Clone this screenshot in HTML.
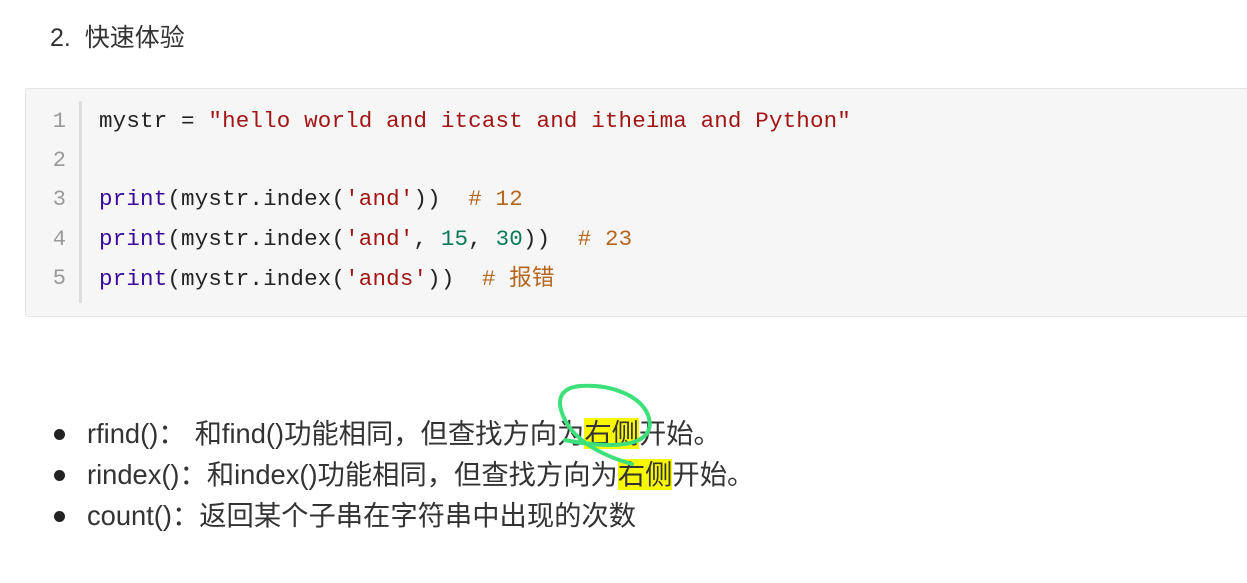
<!DOCTYPE html>
<html><head><meta charset="utf-8"><style>
body{margin:0;width:1247px;height:583px;background:#fff;position:relative;overflow:hidden;font-family:"Liberation Sans","Noto Sans CJK SC",sans-serif;color:#333}
.h{position:absolute;left:50px;top:18px;font-size:25px;color:#333}
.code{position:absolute;left:25px;top:88px;width:1224px;height:227px;background:#f6f6f6;border:1px solid #e4e4e4;border-radius:3px}
.gut{position:absolute;left:79px;top:101px;width:3px;height:202px;background:#ddd}
.ln{position:absolute;left:40px;width:26px;text-align:right;font-family:"Liberation Mono",monospace;font-size:22px;line-height:30px;color:#999}
.cl{position:absolute;left:99px;font-family:"Liberation Mono","Noto Sans CJK SC",monospace;font-size:22.5px;line-height:30px;letter-spacing:0.17px;color:#222;white-space:pre}
.s{color:#a31515}.k{color:#3a0a9a}.n{color:#0a7a5a}.c{color:#b5651d}
.li{position:absolute;left:87px;font-size:27.3px;line-height:36px;color:#333;white-space:pre}
.dot{position:absolute;left:54px;width:11px;height:11px;border-radius:50%;background:#222}
.hl{background:#f7f700}
</style></head><body>
<div class="h">2.&nbsp; 快速体验</div>
<div class="code"></div>
<div class="gut"></div>
<div class="ln" style="top:107px">1</div><div class="ln" style="top:146px">2</div><div class="ln" style="top:185px">3</div><div class="ln" style="top:225px">4</div><div class="ln" style="top:264px">5</div>
<div class="cl" style="top:106px">mystr = <span class="s">"hello world and itcast and itheima and Python"</span></div>
<div class="cl" style="top:184px"><span class="k">print</span>(mystr.index(<span class="s">'and'</span>))  <span class="c"># 12</span></div>
<div class="cl" style="top:224px"><span class="k">print</span>(mystr.index(<span class="s">'and'</span>, <span class="n">15</span>, <span class="n">30</span>))  <span class="c"># 23</span></div>
<div class="cl" style="top:264px"><span class="k">print</span>(mystr.index(<span class="s">'ands'</span>))  <span class="c"># 报错</span></div>
<div class="dot" style="top:429px"></div><div class="dot" style="top:470px"></div><div class="dot" style="top:511px"></div>
<div class="li" style="top:416px">rfind()：<span style="margin-left:9px"></span>和find()功能相同，但查找方向为<span class="hl">右侧</span>开始。</div>
<div class="li" style="top:457px">rindex()：和index()功能相同，但查找方向为<span class="hl">右侧</span>开始。</div>
<div class="li" style="top:498px">count()：返回某个子串在字符串中出现的次数</div>
<svg style="position:absolute;left:0;top:0" width="1247" height="583"><path d="M632 464 C600 455 575 440 565 420 C555 400 560 388 580 386 C610 384 640 395 648 415 C655 435 640 445 610 445 C590 445 575 442 565 440" fill="none" stroke="#3de07a" stroke-width="4" stroke-linecap="round"/></svg>
</body></html>
